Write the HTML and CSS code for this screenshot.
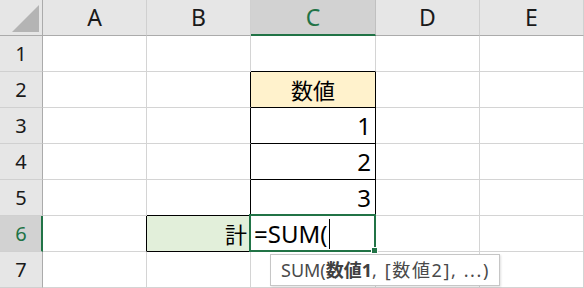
FILE: index.html
```html
<!DOCTYPE html>
<html lang="ja">
<head>
<meta charset="utf-8">
<title>Sheet</title>
<link rel="stylesheet" href="styles.css">
</head>
<body>
<div class="wrap">
  <div class="sheet">
    <div class="c corner">
      <svg class="tri" width="42" height="35" viewBox="0 0 42 35"><polygon points="39,5 39,32 12,32" fill="#b4b4b4"/></svg>
    </div>
    <div class="c ch">A</div>
    <div class="c ch">B</div>
    <div class="c ch ch-sel">C</div>
    <div class="c ch">D</div>
    <div class="c ch">E</div>

    <div class="c rh">1</div>
    <div class="c"></div>
    <div class="c"></div>
    <div class="c bb-k"></div>
    <div class="c"></div>
    <div class="c"></div>

    <div class="c rh">2</div>
    <div class="c"></div>
    <div class="c br-k"></div>
    <div class="c box head">数値</div>
    <div class="c"></div>
    <div class="c"></div>

    <div class="c rh">3</div>
    <div class="c"></div>
    <div class="c br-k"></div>
    <div class="c box num">1</div>
    <div class="c"></div>
    <div class="c"></div>

    <div class="c rh">4</div>
    <div class="c"></div>
    <div class="c br-k"></div>
    <div class="c box num">2</div>
    <div class="c"></div>
    <div class="c"></div>

    <div class="c rh">5</div>
    <div class="c"></div>
    <div class="c bb-k br-k"></div>
    <div class="c box num">3</div>
    <div class="c"></div>
    <div class="c"></div>

    <div class="c rh rh-sel">6</div>
    <div class="c br-k"></div>
    <div class="c box total">計</div>
    <div class="c active"><span class="entry">=SUM(</span><span class="caret"></span><span class="sel"><span class="handle"></span></span></div>
    <div class="c"></div>
    <div class="c"></div>

    <div class="c rh">7</div>
    <div class="c"></div>
    <div class="c"></div>
    <div class="c"></div>
    <div class="c"></div>
    <div class="c"></div>
  </div>
  <div class="tip">SUM(<b>数値1</b><span class="tail">, [数値2], ...)</span></div>
</div>
</body>
</html>
```
FILE: styles.css
```css
html, body {
  margin: 0;
  padding: 0;
  background: #ffffff;
  overflow: hidden;
}
.wrap {
  position: relative;
  width: 584px;
  height: 288px;
  font-family: "Noto Sans", "Noto Sans CJK JP", sans-serif;
  color: #000;
}
.sheet {
  display: grid;
  grid-template-columns: 43px 104px 104px 125px 104px 104px;
  grid-auto-rows: 36px;
}
.c {
  box-sizing: border-box;
  border-right: 1px solid #d4d4d4;
  border-bottom: 1px solid #d4d4d4;
  display: flex;
  align-items: center;
  padding: 0 4px;
  font-size: 24px;
  line-height: 1;
  white-space: nowrap;
}
.corner {
  background: #e6e6e6;
  border-right-color: #ababab;
  border-bottom-color: #ababab;
  padding: 0;
}
.tri { display: block; }
.ch {
  background: #e6e6e6;
  justify-content: center;
  border-right-color: #d0d0d0;
  border-bottom-color: #ababab;
  color: #1a1a1a;
  font-size: 23px;
}
.ch-sel {
  background: #d2d2d2;
  color: #217346;
  border-bottom: 2px solid #217346;
  border-right-color: #c0c0c0;
  padding-top: 1px;
}
.rh {
  background: #e6e6e6;
  justify-content: center;
  border-right-color: #ababab;
  border-bottom-color: #d0d0d0;
  color: #1a1a1a;
  padding: 0;
  font-size: 20px;
}
.rh-sel {
  background: #d2d2d2;
  color: #217346;
  border-right: 2px solid #217346;
  padding-left: 1px;
}
.bb-k { border-bottom-color: #000; }
.br-k { border-right-color: #000; }
.box {
  border-right-color: #000;
  border-bottom-color: #000;
}
.head {
  background: #fff2cc;
  justify-content: center;
  font-size: 22px;
}
.num {
  justify-content: flex-end;
  padding-right: 4px;
}
.total {
  background: #e2efda;
  justify-content: flex-end;
  padding-right: 3px;
  font-size: 22px;
}
.active {
  position: relative;
  padding-left: 3px;
}
.caret {
  display: inline-block;
  width: 1px;
  height: 30px;
  background: #000;
  margin-left: 2px;
}
.sel {
  position: absolute;
  left: -2px;
  top: -2px;
  right: -1px;
  bottom: -1px;
  border: 2px solid #217346;
}
.handle {
  position: absolute;
  right: -4px;
  bottom: -4px;
  width: 5px;
  height: 5px;
  background: #217346;
  border: 1px solid #ffffff;
}
.tip {
  position: absolute;
  left: 270px;
  top: 254px;
  width: 230px;
  height: 32px;
  box-sizing: border-box;
  background: #ffffff;
  border: 1px solid #c6c6c6;
  box-shadow: 1px 1px 2px rgba(0,0,0,0.12);
  color: #4a4a4a;
  font-size: 18px;
  line-height: 30px;
  padding-left: 10px;
  white-space: nowrap;
}
.tip b { font-weight: 700; color: #404040; }
.tail { letter-spacing: 1.6px; }
```
